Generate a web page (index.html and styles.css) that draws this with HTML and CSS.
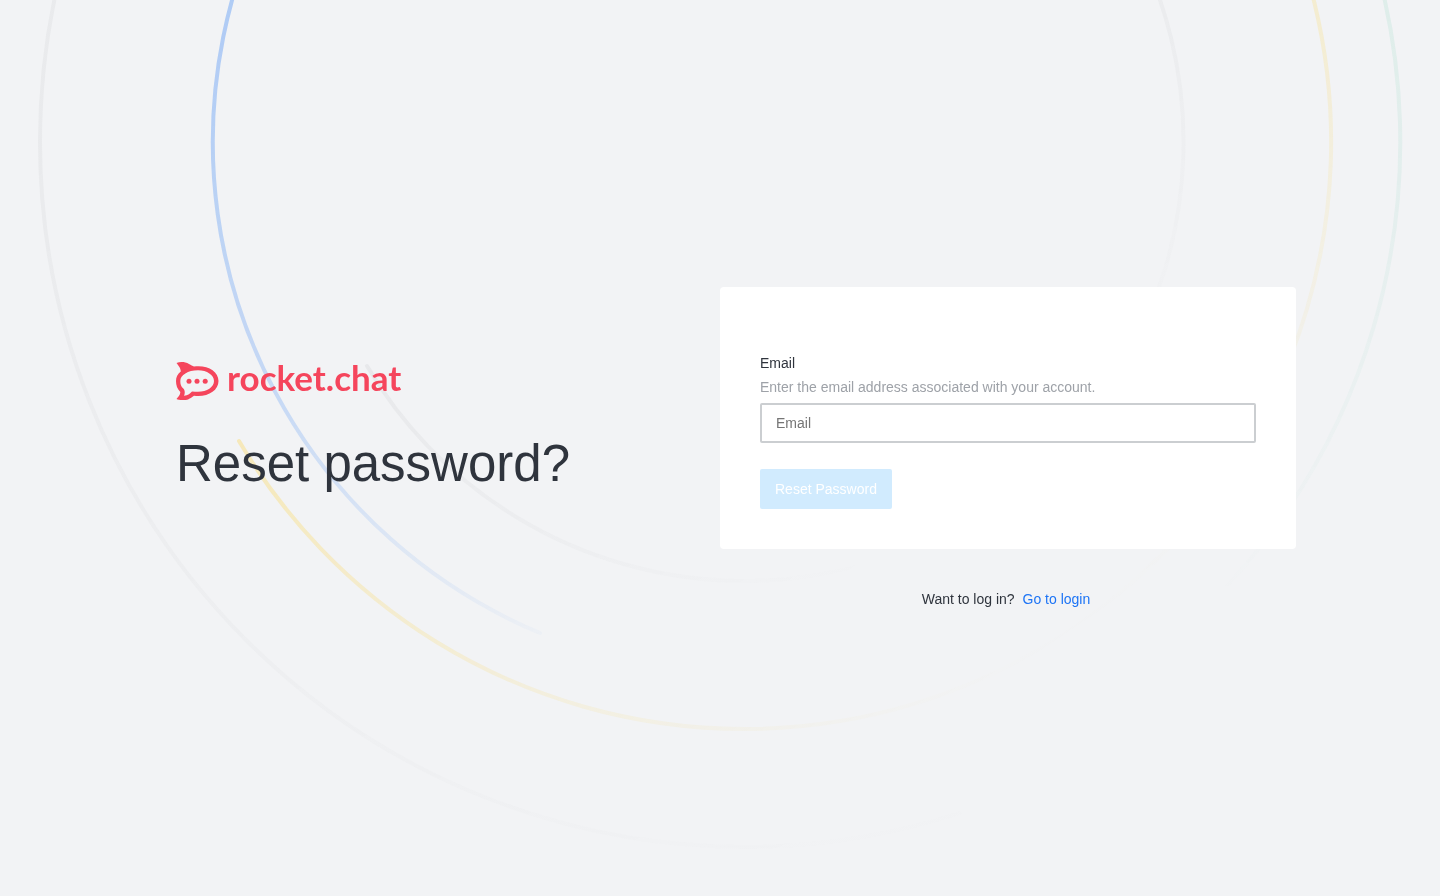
FILE: index.html
```html
<!DOCTYPE html>
<html lang="en">
<head>
<meta charset="utf-8">
<meta name="viewport" content="width=device-width, initial-scale=1">
<title>Reset password</title>
<link rel="stylesheet" href="styles.css">
</head>
<body>
<svg class="backdrop" viewBox="0 0 1440 896" preserveAspectRatio="xMidYMin slice" aria-hidden="true">
  <defs>
    <linearGradient id="blue" gradientUnits="userSpaceOnUse" x1="300" y1="0" x2="450" y2="690">
      <stop offset="0" stop-color="#1d74f5" stop-opacity=".31"/>
      <stop offset=".55" stop-color="#1d74f5" stop-opacity=".2"/>
      <stop offset="1" stop-color="#1d74f5" stop-opacity="0"/>
    </linearGradient>
    <linearGradient id="yellow" gradientUnits="userSpaceOnUse" x1="239" y1="441" x2="590" y2="960">
      <stop offset="0" stop-color="#ffd031" stop-opacity=".3"/>
      <stop offset="1" stop-color="#ffd031" stop-opacity="0"/>
    </linearGradient>
    <linearGradient id="green" gradientUnits="userSpaceOnUse" x1="1340" y1="0" x2="1230" y2="600">
      <stop offset="0" stop-color="#1fb888" stop-opacity=".09"/>
      <stop offset="1" stop-color="#1fb888" stop-opacity="0"/>
    </linearGradient>
    <linearGradient id="inner" gradientUnits="userSpaceOnUse" x1="367" y1="366" x2="620" y2="740">
      <stop offset="0" stop-color="#6c6c70" stop-opacity=".07"/>
      <stop offset="1" stop-color="#6c6c70" stop-opacity="0"/>
    </linearGradient>
    <linearGradient id="outer" gradientUnits="userSpaceOnUse" x1="60" y1="100" x2="560" y2="1080">
      <stop offset="0" stop-color="#6c6c70" stop-opacity=".06"/>
      <stop offset="1" stop-color="#6c6c70" stop-opacity="0"/>
    </linearGradient>
  </defs>
  <g fill="none" stroke-width="4" stroke-linecap="round">
    <path stroke="url(#outer)" d="M745 -563A705 705 0 0 0 745 847A705 705 0 0 0 960 813"/>
    <path stroke="url(#blue)" d="M745 -390A532 532 0 0 0 540 633"/>
    <path stroke="url(#green)" d="M745 -513A655 655 0 0 1 1150 657"/>
    <path stroke="url(#yellow)" d="M239 441A587 587 0 1 0 745 -445"/>
    <path stroke="url(#inner)" d="M367 366A439 439 0 1 0 745 -297"/>
  </g>
</svg>
<main class="page">
  <section class="intro">
    <div class="brand">
      <svg class="brand-icon" viewBox="0 0 43 39" aria-hidden="true">
        <path fill-rule="evenodd" d="M.5 1C4-.3 9-.3 13 2C15 3 16.500 4.200 18 4.500C31 2.700 42.500 9 42.500 19C42.500 29 31 35.500 18 33.700C15 35.500 13 38 8 38C5 38.300 2 37.700 .5 37C2 35 4.500 33 4.300 30C1.200 27 0 23 0 19C0 15 1.500 12 4.800 9.500C4.800 6 2 3 .5 1ZM22 8.200C12 8.200 4.300 13 4.300 19C4.300 22 5 24.500 7.300 26.500C9.200 28.500 9 31.500 8 33.800C12 33.500 14.500 31 16 29.400C18 29.700 20 29.800 22 29.800C31 29.800 38 25 38 19C38 13 31 8.200 22 8.200Z"/>
        <circle cx="13" cy="19.200" r="2.500"/><circle cx="21" cy="19.200" r="2.500"/><circle cx="29.200" cy="19.200" r="2.500"/>
      </svg>
      <span class="brand-name">rocket.chat</span>
    </div>
    <h1 class="title">Reset password?</h1>
  </section>
  <section class="panel">
    <form class="card">
      <label class="label" for="email">Email</label>
      <p class="hint" id="email-hint">Enter the email address associated with your account.</p>
      <input class="input" id="email" type="email" placeholder="Email" aria-describedby="email-hint">
      <button class="button" type="submit" disabled>Reset Password</button>
    </form>
    <p class="footer">Want to log in? <a class="link" href="#login">Go to login</a></p>
  </section>
</main>
</body>
</html>
```
FILE: styles.css
```css
* {
  box-sizing: border-box;
}

body {
  margin: 0;
  background: #f2f3f5;
  color: #2f343d;
  font: 14px/20px Helvetica, "Liberation Sans", sans-serif;
}

.backdrop {
  position: fixed;
  inset: 0;
  z-index: -1;
  width: 100%;
  height: 100%;
}

.page {
  display: grid;
  grid-template-columns: 1fr 1fr;
  align-items: center;
  min-height: 100vh;
  padding: 0 10%;
}

.intro {
  padding: 0 32px 40px;
}

.brand {
  display: flex;
  align-items: flex-start;
  gap: 8px;
  color: #f5455c;
}

.brand-icon {
  width: 43px;
  height: 39px;
  fill: currentColor;
}

.brand-name {
  font: 700 35px/30px Lato, sans-serif;
}

.title {
  margin: 32px 0 0;
  font-size: 51px;
  line-height: 62px;
  font-weight: 400;
}

.card {
  display: flex;
  flex-direction: column;
  align-items: flex-start;
  padding: 66px 40px 40px;
  border-radius: 4px;
  background: #fff;
}

.hint {
  margin: 4px 0 6px;
  color: #9ea2a8;
}

.input {
  width: 100%;
  height: 40px;
  padding: 0 14px;
  border: 2px solid #cbced1;
  border-radius: 2px;
  background: #fff;
  color: #2f343d;
  font: inherit;
}

.input::placeholder {
  color: #757575;
}

.button {
  height: 40px;
  margin-top: 26px;
  padding: 0 15px;
  border: 0;
  border-radius: 2px;
  background: #d1ebfe;
  color: #fff;
  font: inherit;
}

.footer {
  margin: 40px 4px 0 0;
  text-align: center;
}

.link {
  margin-left: 4px;
  color: #1d74f5;
  text-decoration: none;
}
```
